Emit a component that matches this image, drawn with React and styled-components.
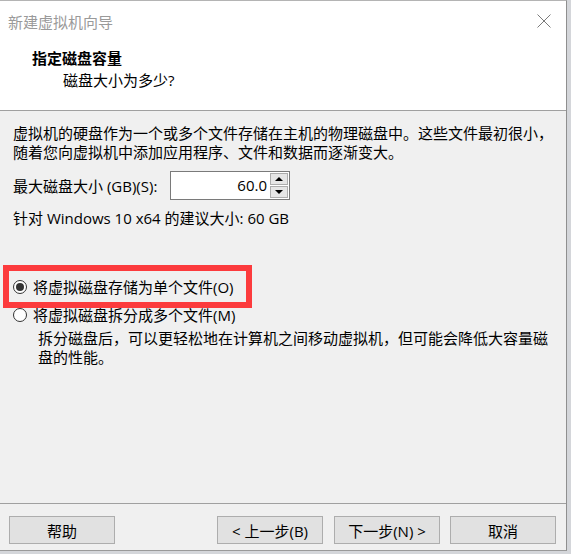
import React from "react";
import styled, { createGlobalStyle } from "styled-components";

const Global = createGlobalStyle`
  html, body { margin: 0; padding: 0; }
  body {
    width: 571px; height: 554px; overflow: hidden;
    background: #d4d6da;
    font-family: "Open Sans", "Noto Sans CJK SC", sans-serif;
    font-size: 15px; color: #000;
  }
`;

const Window = styled.div`
  position: relative;
  width: 567px; height: 551px;
  box-sizing: border-box;
  border-top: 1px solid #b4b4b4;
  border-right: 1px solid #8f8f8f;
  border-bottom: 1px solid #9a9a9a;
  background: #f0f0f0;
  display: flex; flex-direction: column;
`;

const TitleBar = styled.div`
  height: 40px; flex: none;
  display: flex; align-items: center; justify-content: space-between;
  padding: 0 10px 0 8px;
  background: #fff;
  color: #9a9a9a;
  font-size: 15px;
`;

const CloseIcon = () => (
  <svg width="16" height="16" viewBox="0 0 16 16" style={{ marginRight: 4 }}>
    <path d="M1.5 1.5 L14.5 14.5 M14.5 1.5 L1.5 14.5" stroke="#7a7a7a" strokeWidth="1" fill="none" />
  </svg>
);

const Header = styled.div`
  height: 70px; flex: none;
  background: #fff;
  border-bottom: 1px solid #a0a0a0;
  padding: 7px 0 0 32px;
  box-sizing: border-box;
  line-height: 20px;
`;

const HeaderTitle = styled.div`
  font-weight: bold;
  height: 22px;
`;

const HeaderSub = styled.div`
  padding-left: 31px;
`;

const Content = styled.div`
  flex: 1;
  padding: 13px 13px 0 13px;
  line-height: 20px;
`;

const Para = styled.p`
  margin: 0;
  line-height: 19px;
`;

const SizeRow = styled.div`
  display: flex; align-items: center;
  margin-top: 9px;
`;

const SizeLabel = styled.span`
  flex: none;
  width: 157px;
`;

const SpinBox = styled.div`
  display: flex;
  width: 120px; height: 29px;
  box-sizing: border-box;
  border: 1px solid #7a7a7a;
  background: #fff;
`;

const SpinInput = styled.div`
  flex: 1;
  text-align: right;
  padding-right: 3px;
  line-height: 27px;
`;

const SpinButtons = styled.div`
  width: 19px;
  display: flex; flex-direction: column;
  gap: 1px;
  padding: 1px 1px 1px 0;
  box-sizing: border-box;
`;

const SpinBtn = styled.div`
  flex: 1;
  background: #e5e5e5;
  border: 1px solid #acacac;
  display: flex; align-items: center; justify-content: center;
  &::after {
    content: "";
    border-left: 4px solid transparent;
    border-right: 4px solid transparent;
    ${p => p.$up ? "border-bottom: 4px solid #000;" : "border-top: 4px solid #000;"}
  }
`;

const Recommend = styled.div`
  margin-top: 8px;
`;

const Options = styled.div`
  position: relative;
  margin-top: 45px;
  display: flex; flex-direction: column;
`;

const RadioRow = styled.div`
  display: flex; align-items: center; gap: 6px;
  height: 28px;
`;

const Radio = styled.span`
  width: 14px; height: 14px; flex: none;
  box-sizing: border-box;
  border-radius: 50%;
  border: 1px solid #333;
  background: #fff;
  display: flex; align-items: center; justify-content: center;
  &::after {
    content: "";
    width: 8px; height: 8px; border-radius: 50%;
    background: ${p => (p.$checked ? "#333" : "transparent")};
  }
`;

const Desc = styled.p`
  margin: 0;
  padding-left: 25px;
  line-height: 19px;
`;

const Highlight = styled.div`
  position: absolute;
  left: -10px; top: -8px;
  width: 249px; height: 43px;
  box-sizing: border-box;
  border: 6px solid #fc3b3d;
  pointer-events: none;
`;

const Footer = styled.div`
  flex: none;
  border-top: 1px solid #a0a0a0;
  padding: 12px 10px 6px 9px;
  display: flex; align-items: center;
`;

const Button = styled.div`
  width: 106px; height: 28px;
  box-sizing: border-box;
  border: 1px solid #adadad;
  background: #e1e1e1;
  display: flex; align-items: center; justify-content: center;
  margin-left: ${p => p.$gap || 0}px;
  white-space: pre;
`;

const Spacer = styled.div`flex: 1;`;

export default function App() {
  return (
    <>
      <Global />
      <Window>
        <TitleBar>
          <span>新建虚拟机向导</span>
          <CloseIcon />
        </TitleBar>
        <Header>
          <HeaderTitle>指定磁盘容量</HeaderTitle>
          <HeaderSub>磁盘大小为多少?</HeaderSub>
        </Header>
        <Content>
          <Para>
            虚拟机的硬盘作为一个或多个文件存储在主机的物理磁盘中。这些文件最初很小，
            <br />
            随着您向虚拟机中添加应用程序、文件和数据而逐渐变大。
          </Para>
          <SizeRow>
            <SizeLabel>最大磁盘大小 (GB)(S):</SizeLabel>
            <SpinBox>
              <SpinInput>60.0</SpinInput>
              <SpinButtons>
                <SpinBtn $up />
                <SpinBtn />
              </SpinButtons>
            </SpinBox>
          </SizeRow>
          <Recommend>针对 Windows 10 x64 的建议大小: 60 GB</Recommend>
          <Options>
            <RadioRow>
              <Radio $checked />
              <span>将虚拟磁盘存储为单个文件(O)</span>
            </RadioRow>
            <RadioRow>
              <Radio />
              <span>将虚拟磁盘拆分成多个文件(M)</span>
            </RadioRow>
            <Desc>
              拆分磁盘后，可以更轻松地在计算机之间移动虚拟机，但可能会降低大容量磁
              <br />
              盘的性能。
            </Desc>
            <Highlight />
          </Options>
        </Content>
        <Footer>
          <Button>帮助</Button>
          <Spacer />
          <Button>{"< 上一步(B)"}</Button>
          <Button $gap={11}>{"下一步(N) >"}</Button>
          <Button $gap={10}>取消</Button>
        </Footer>
      </Window>
    </>
  );
}
